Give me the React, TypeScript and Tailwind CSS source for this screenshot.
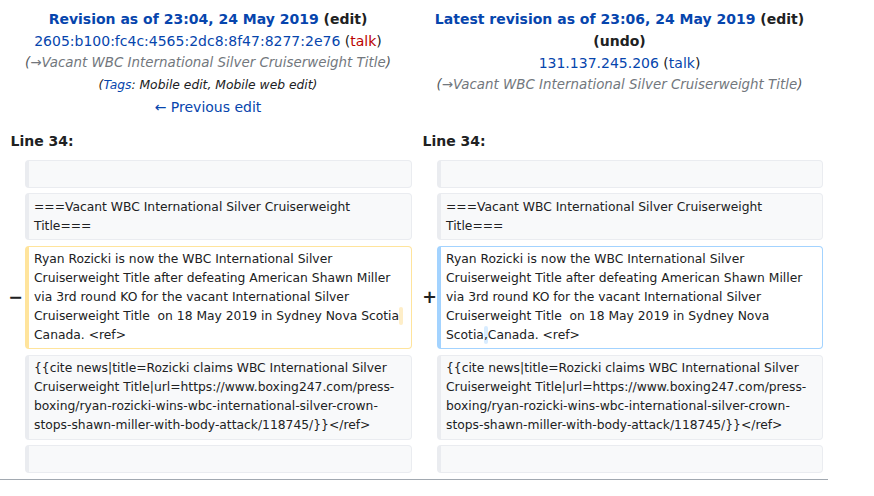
import React from "react";

const BLUE = "text-[#0645ad]";

function Box({
  kind,
  children,
}: {
  kind: "ctx" | "del" | "add";
  children?: React.ReactNode;
}) {
  const cls =
    kind === "ctx"
      ? "bg-[#f8f9fa] border-[#eaecf0]"
      : kind === "del"
      ? "bg-white border-[#ffe49c]"
      : "bg-white border-[#a3d3ff]";
  return (
    <div
      className={`border border-l-4 rounded-[4px] px-[5px] py-[3.4px] text-[12.32px] leading-[19px] whitespace-pre-wrap break-words ${cls}`}
    >
      {children ?? <br />}
    </div>
  );
}

function Marker({ sign, shift }: { sign: string; shift: string }) {
  return (
    <div className="flex items-center justify-end text-[17.5px] font-bold leading-none">
      <span className={shift}>{sign}</span>
    </div>
  );
}

export default function App() {
  const ctx1 = "===Vacant WBC International Silver Cruiserweight Title===";
  const cite =
    "{{cite news|title=Rozicki claims WBC International Silver Cruiserweight Title|url=https://www.boxing247.com/press-boxing/ryan-rozicki-wins-wbc-international-silver-crown-stops-shawn-miller-with-body-attack/118745/}}</ref>";
  const base =
    "Ryan Rozicki is now the WBC International Silver Cruiserweight Title after defeating American Shawn Miller via 3rd round KO for the vacant International Silver Cruiserweight Title  on 18 May 2019 in Sydney Nova Scotia";

  return (
    <div className="w-[874px] h-[496px] bg-white font-['DejaVu_Sans',sans-serif] text-[#202122] overflow-hidden">
      <div className="w-[828px] pt-[8px] pb-[6px] border-b border-[#a2a9b1]">
        {/* Header */}
        <div className="grid grid-cols-[17px_387px_17px_386px] gap-x-[4px] pl-[4px] text-[14px] leading-[22px]">
          <div className="col-span-2 text-center">
            <div className="font-bold">
              <span className={BLUE}>Revision as of 23:04, 24 May 2019</span>{" "}
              (edit)
            </div>
            <div>
              <span className={BLUE}>2605:b100:fc4c:4565:2dc8:8f47:8277:2e76</span>{" "}
              (<span className="text-[#ba0000]">talk</span>)
            </div>
            <div className="italic text-[13.4px] text-[#54595d]">
              (<span className="text-[#72777d]">→Vacant WBC International Silver Cruiserweight Title</span>)
            </div>
            <div className="italic text-[12.32px]">
              (<span className={BLUE}>Tags</span>: Mobile edit, Mobile web edit)
            </div>
            <div className={BLUE}>← Previous edit</div>
          </div>
          <div className="col-span-2 text-center">
            <div className="font-bold">
              <span className={BLUE}>Latest revision as of 23:06, 24 May 2019</span>{" "}
              (edit)
            </div>
            <div className="font-bold">(undo)</div>
            <div>
              <span className={BLUE}>131.137.245.206</span>{" "}
              (<span className={BLUE}>talk</span>)
            </div>
            <div className="italic text-[13.4px] text-[#54595d]">
              (<span className="text-[#72777d]">→Vacant WBC International Silver Cruiserweight Title</span>)
            </div>
          </div>
        </div>

        {/* Line numbers */}
        <div className="mt-[12px] grid grid-cols-[17px_387px_17px_386px] gap-x-[4px] pl-[4px] text-[14px] leading-[22px] font-bold">
          <div className="col-span-2 pl-[6.5px]">Line 34:</div>
          <div className="col-span-2 pl-[6.5px]">Line 34:</div>
        </div>

        {/* Diff rows */}
        <div className="mt-[8.3px] grid grid-cols-[17px_387px_17px_386px] gap-x-[4px] gap-y-[5.4px] pl-[4px]">
          <div />
          <Box kind="ctx" />
          <div />
          <Box kind="ctx" />

          <div />
          <Box kind="ctx">{ctx1}</Box>
          <div />
          <Box kind="ctx">{ctx1}</Box>

          <Marker sign="−" shift="-mr-[2px]" />
          <Box kind="del">
            {base}
            <del className="no-underline bg-[#feeec8] rounded-[3px] py-[2px]"> </del>
            {"Canada. <ref>"}
          </Box>
          <Marker sign="+" shift="-mr-[4px]" />
          <Box kind="add">
            {base}
            <ins className="no-underline bg-[#d8ecff] rounded-[3px] py-[2px]">,</ins>
            {"Canada. <ref>"}
          </Box>

          <div />
          <Box kind="ctx">{cite}</Box>
          <div />
          <Box kind="ctx">{cite}</Box>

          <div />
          <Box kind="ctx" />
          <div />
          <Box kind="ctx" />
        </div>
      </div>
    </div>
  );
}
